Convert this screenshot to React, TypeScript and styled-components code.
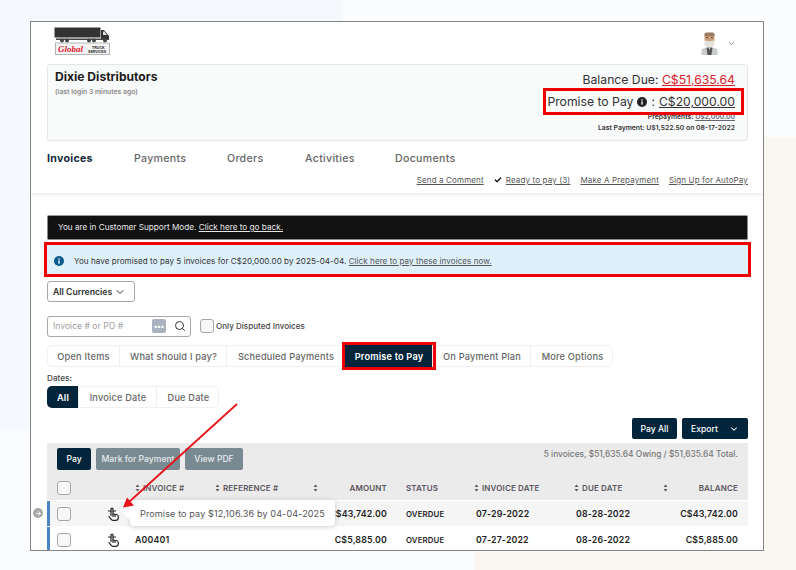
import React from "react";
import styled, { createGlobalStyle } from "styled-components";
import { Check, ChevronDown, Search, ArrowRight } from "lucide-react";

const GlobalStyle = createGlobalStyle`
    * { box-sizing: border-box; }
    html, body { margin: 0; padding: 0; height: 570px; overflow: hidden; }
    body {
        font-family: Inter, "Liberation Sans", sans-serif;
        color: #222;
        background-color: #fbfcfe;
        background-image:
            linear-gradient(#faf6f0, #faf6f0),
            linear-gradient(#faf6f0, #faf6f0),
            linear-gradient(#f5f8fd, #f5f8fd),
            linear-gradient(#f9fbfe, #f9fbfe);
        background-repeat: no-repeat;
        background-size: 321px 433px, 33px 433px, 342px 430px, 475px 140px;
        background-position: 475px 137px, 763px 137px, 0 0, 0 430px;
    }
`;

const Page = styled.div`
    padding: 21px 0 0 30px;
`;

const Frame = styled.div`
    position: relative;
    width: 734px;
    height: 530px;
    background: #fff;
    border: 1px solid #858585;
    overflow: hidden;
`;

const Header = styled.header`
    height: 172px;
    padding: 0 15px 0 16px;
    border-bottom: 1px solid #ececec;
    box-shadow: 0 2px 3px rgba(0, 0, 0, 0.06);
`;

const TopBar = styled.div`
    height: 42px;
    display: flex;
    align-items: flex-start;
    justify-content: space-between;
    padding: 5px 12px 0 7px;
`;

const Profile = styled.div`
    display: flex;
    align-items: center;
    gap: 9px;
    padding-top: 5px;
    color: #666;
`;

const SummaryCard = styled.section`
    height: 77px;
    display: flex;
    justify-content: space-between;
    padding: 5px 12px 0 7px;
    background: #f9fafa;
    border: 1px solid #e6e8e8;
    border-radius: 3px;
`;

const CompanyName = styled.div`
    font-size: 12.1px;
    font-weight: 700;
    color: #1c1c1c;
    line-height: 14px;
`;

const LastLogin = styled.div`
    font-size: 6.8px;
    font-weight: 600;
    color: #8a8a8a;
    line-height: 10px;
    margin-top: 3px;
`;

const Balances = styled.div`
    display: flex;
    flex-direction: column;
    align-items: flex-end;
`;

const BalanceLine = styled.div`
    font-size: 12.2px;
    line-height: 16px;
    height: 18px;
    padding-top: 2px;
    color: #333;
`;

const RedAmount = styled.a`
    color: #d8212b;
    text-decoration: underline;
`;

const PromiseBox = styled.div`
    position: relative;
    z-index: 1;
    display: flex;
    align-items: center;
    gap: 4px;
    height: 27px;
    margin-right: -9px;
    padding: 0 6px 0 1px;
    border: 3px solid #f00000;
    font-size: 12.2px;
    color: #333;
`;

const DarkAmount = styled.a`
    color: #333;
    text-decoration: underline;
`;

const SmallLine = styled.div<{ $offset?: number }>`
    font-size: 6.8px;
    font-weight: 600;
    line-height: 10px;
    color: #333;
    margin-top: ${(p) => p.$offset ?? 0}px;
`;

const MutedLink = styled.a`
    color: #667;
    text-decoration: underline;
`;

const Nav = styled.nav`
    display: flex;
    height: 34px;
    padding-top: 11px;
`;

const NavItem = styled.a<{ $active?: boolean; $width: number }>`
    width: ${(p) => p.$width}px;
    font-size: 10.6px;
    line-height: 14px;
    letter-spacing: 0.3px;
    font-weight: ${(p) => (p.$active ? 700 : 500)};
    color: ${(p) => (p.$active ? "#13293a" : "#666")};
`;

const ActionLinks = styled.div`
    display: flex;
    justify-content: flex-end;
    align-items: center;
    gap: 10px;
    height: 14px;
    margin-top: -2px;
`;

const ActionLink = styled.a`
    display: inline-flex;
    align-items: center;
    gap: 4px;
    font-size: 8px;
    letter-spacing: 0.14px;
    color: #555;
    text-decoration: underline;
`;

const Main = styled.main`
    padding: 21px 15px 0 16px;
`;

const SupportBar = styled.div`
    height: 25px;
    display: flex;
    align-items: center;
    padding: 0 0 1px 10px;
    background: #111;
    border: 1px solid #888;
    border-top-color: #999;
    border-radius: 2px;
    font-size: 8.2px;
    color: #e8e8e8;
    a {
        color: #e8e8e8;
        text-decoration: underline;
    }
`;

const NoticeBox = styled.div`
    height: 35px;
    margin: 2px -3px 0;
    display: flex;
    align-items: center;
    gap: 10px;
    padding: 3px 0 0 7px;
    background: #def1fb;
    border: 3px solid #f00000;
    font-size: 8.1px;
    letter-spacing: 0.04px;
    color: #333;
    a {
        color: #555;
        text-decoration: underline;
    }
`;

const CurrencySelect = styled.div`
    width: 88px;
    height: 21px;
    margin-top: 4px;
    display: flex;
    align-items: center;
    justify-content: space-between;
    padding: 0 8px 0 5px;
    border: 1px solid #a8a8a8;
    border-radius: 3px;
    font-size: 8.7px;
    font-weight: 600;
    color: #333;
`;

const SearchRow = styled.div`
    display: flex;
    align-items: center;
    margin-top: 14px;
    height: 20px;
`;

const SearchBox = styled.div`
    width: 144px;
    height: 21px;
    display: flex;
    align-items: center;
    padding: 0 4px 0 5px;
    border: 1px solid #a8a8a8;
    border-radius: 3px;
    font-size: 8.6px;
    color: #a0a0a0;
`;

const Placeholder = styled.span`
    flex: 1;
`;

const DotsButton = styled.span`
    width: 14px;
    height: 14px;
    margin-right: 8px;
    display: flex;
    align-items: center;
    justify-content: center;
    background: #abb2bf;
    border-radius: 2px;
    color: #fff;
    font-size: 7px;
    font-weight: 700;
    line-height: 1;
`;

const Checkbox = styled.span<{ $margin?: number }>`
    display: block;
    flex: none;
    width: 14px;
    height: 14px;
    margin-left: ${(p) => p.$margin ?? 0}px;
    background: #f8f8f8;
    border: 1px solid #a2a8ad;
    border-radius: 3px;
`;

const CheckLabel = styled.span`
    margin-left: 2px;
    font-size: 8.1px;
    font-weight: 500;
    color: #444;
`;

const Segments = styled.div<{ $top: number }>`
    display: inline-flex;
    height: 22px;
    margin-top: ${(p) => p.$top}px;
    border: 1px solid #f0f0f0;
    border-radius: 5px;
    vertical-align: top;
`;

const Segment = styled.span<{ $width: number; $active?: boolean; $marked?: boolean }>`
    position: relative;
    width: ${(p) => p.$width}px;
    margin: -1px 0;
    padding-left: 1px;
    display: flex;
    align-items: center;
    justify-content: center;
    font-size: 9.2px;
    font-weight: ${(p) => (p.$active ? 600 : 500)};
    letter-spacing: 0.2px;
    color: ${(p) => (p.$active ? "#fff" : "#666")};
    background: ${(p) => (p.$active ? "#03253b" : "transparent")};
    border-right: 1px solid #efefef;
    border-radius: ${(p) => (p.$active && !p.$marked ? "5px 0 0 5px" : "0")};
    box-shadow: ${(p) => (p.$marked ? "0 0 0 3px #f00000" : "none")};
    &:first-child {
        margin-left: -1px;
    }
    &:last-child {
        border-right: none;
        margin-right: -1px;
    }
`;

const DatesLabel = styled.div`
    margin-top: 6px;
    font-size: 8.2px;
    line-height: 10px;
    font-weight: 500;
    color: #444;
`;

const TableActions = styled.div`
    margin-top: 10px;
    display: flex;
    justify-content: flex-end;
    gap: 5px;
`;

const DarkButton = styled.button<{ $width: number; $height?: number; $between?: boolean }>`
    width: ${(p) => p.$width}px;
    height: ${(p) => p.$height ?? 21}px;
    display: flex;
    align-items: center;
    justify-content: ${(p) => (p.$between ? "space-between" : "center")};
    padding: ${(p) => (p.$between ? "0 9px" : "0")};
    background: #03253b;
    color: #fff;
    border: none;
    border-radius: 2px;
    font-family: inherit;
    font-size: 8.6px;
    font-weight: 500;
`;

const GrayButton = styled(DarkButton)`
    background: #7a8a93;
    color: #e6eaec;
`;

const Table = styled.div`
    margin-top: 4px;
`;

const Toolbar = styled.div`
    height: 33px;
    display: flex;
    gap: 5px;
    padding: 5px 10px;
    background: #ebebeb;
`;

const ToolbarTotals = styled.div`
    margin-left: auto;
    font-size: 8.35px;
    font-weight: 500;
    line-height: 12px;
    color: #777;
`;

const Row = styled.div<{ $kind: "head" | "odd" | "even" }>`
    position: relative;
    display: grid;
    grid-template-columns: 50px 35px 80px 98px 74px 19px 68px 100px 89px 75px 9px;
    align-items: center;
    height: ${(p) => (p.$kind === "head" ? 24 : 25)}px;
    margin-top: ${(p) => (p.$kind === "head" ? 0 : 1)}px;
    background: ${(p) =>
        p.$kind === "head" ? "#ebebeb" : p.$kind === "odd" ? "#f5f5f5" : "#fff"};
    border-left: 3px solid ${(p) => (p.$kind === "head" ? "transparent" : "#4a86c5")};
`;

const CheckCell = styled.div`
    padding-left: 7px;
`;

const HeadCell = styled.div<{ $column?: number }>`
    grid-column: ${(p) => p.$column ?? "auto"};
    display: flex;
    align-items: center;
    gap: 3px;
    font-size: 8px;
    font-weight: 600;
    letter-spacing: 0.15px;
    color: #5b5560;
    white-space: nowrap;
`;

const HeadSpacer = styled.span`
    flex: 1;
`;

const SortArrows = styled.svg`
    flex: none;
    width: 5px;
    height: 8px;
`;

const Cell = styled.div<{ $right?: boolean; $column?: number; $indent?: number; $small?: boolean }>`
    grid-column: ${(p) => p.$column ?? "auto"};
    padding-left: ${(p) => p.$indent ?? 0}px;
    text-align: ${(p) => (p.$right ? "right" : "left")};
    font-size: ${(p) => (p.$small ? 7.8 : 8.8)}px;
    font-weight: 600;
    letter-spacing: 0.15px;
    color: #1d1d1d;
    white-space: nowrap;
`;

const IconCell = styled.div`
    display: flex;
    padding-left: 7px;
    color: #222;
`;

const RowMarker = styled.div`
    position: absolute;
    left: -17px;
    top: 7px;
    width: 10px;
    height: 10px;
    display: flex;
    align-items: center;
    justify-content: center;
    border-radius: 50%;
    background: #a8a8a8;
    color: #fff;
`;

const Tooltip = styled.div`
    position: absolute;
    left: 80px;
    top: -1px;
    width: 205px;
    height: 26px;
    z-index: 2;
    display: flex;
    align-items: center;
    padding-left: 10px;
    background: #fff;
    border-radius: 4px;
    box-shadow: 0 1px 5px rgba(0, 0, 0, 0.2);
    font-size: 9.05px;
    letter-spacing: 0.12px;
    color: #555;
    white-space: nowrap;
    &::before {
        content: "";
        position: absolute;
        left: -5px;
        top: 8px;
        width: 10px;
        height: 10px;
        background: #fff;
        transform: rotate(45deg);
    }
`;

const Callout = styled.svg`
    position: absolute;
    left: 0;
    top: 0;
    z-index: 3;
    pointer-events: none;
`;

const Logo = () => (
    <svg width="57" height="28" viewBox="0 0 57 28">
        <rect x="0.5" y="0.5" width="46" height="10" fill="#333" />
        <path d="M47 3h3l5 6v4H47z" fill="#333" />
        <path d="M49 4.500h1.500l2.500 3.500h-4z" fill="#ddd" />
        <rect x="2" y="11.500" width="52" height="1.500" fill="#444" />
        <circle cx="8" cy="13.500" r="2" fill="#444" />
        <circle cx="13" cy="13.500" r="2" fill="#444" />
        <circle cx="35" cy="13.500" r="2" fill="#444" />
        <circle cx="40" cy="13.500" r="2" fill="#444" />
        <circle cx="51" cy="13.500" r="2" fill="#444" />
        <rect x="1.500" y="16" width="54" height="11.500" fill="#f4f4f4" stroke="#999" strokeWidth="0.7" />
        <text x="4" y="25" fontFamily="'Liberation Serif', serif" fontStyle="italic" fontWeight="700" fontSize="9" fill="#e0202c">
            Global
        </text>
        <text x="38" y="21.500" fontFamily="'Liberation Sans', sans-serif" fontWeight="700" fontSize="3.600" fill="#222">
            TRUCK
        </text>
        <text x="34" y="26" fontFamily="'Liberation Sans', sans-serif" fontWeight="700" fontSize="3.600" fill="#222">
            SERVICES
        </text>
    </svg>
);

const Avatar = () => (
    <svg width="17" height="23" viewBox="0 0 17 23">
        <path d="M0.500 23v-4c0-2.500 3-3.500 8-3.500s8 1 8 3.500v4z" fill="#c9cccc" />
        <path d="M5.500 15.500h6l-1 7.500h-4z" fill="#555" />
        <path d="M7.500 15.500h2l-1 2.500z" fill="#eee" />
        <rect x="3.500" y="1" width="10" height="9" rx="2" fill="#c79f7d" />
        <path d="M3.500 2l1.500-1.500h7L13.500 2v2h-10z" fill="#9c7b60" />
        <path d="M3.500 8c1.500 1.500 8.500 1.500 10 0v3c0 3-2 4-5 4s-5-1-5-4z" fill="#e4e0da" />
        <rect x="5" y="5" width="2" height="1" fill="#5b4a3c" />
        <rect x="10" y="5" width="2" height="1" fill="#5b4a3c" />
    </svg>
);

const InfoDot = ({ size, fill }: { size: number; fill: string }) => (
    <svg width={size} height={size} viewBox="0 0 12 12">
        <circle cx="6" cy="6" r="6" fill={fill} />
        <rect x="5.200" y="5.200" width="1.600" height="4" fill="#fff" />
        <rect x="5.200" y="2.700" width="1.600" height="1.600" fill="#fff" />
    </svg>
);

const Sort = () => (
    <SortArrows viewBox="0 0 5 8">
        <path d="M2.500 0.500L4.500 3H0.500zM2.500 7.500L0.500 5H4.500z" fill="#5b5560" />
    </SortArrows>
);

const PromiseHand = () => (
    <svg width="12" height="14" viewBox="0 0 12 14" fill="none" stroke="currentColor" strokeWidth="1.200" strokeLinecap="round" strokeLinejoin="round">
        <path d="M4 8.500V2.200a1 1 0 0 1 2 0V7l3.500 0.500c1 0.200 1.800 1 1.800 2v1.300c0 1.400-1 2.500-2.500 2.500H6c-1 0-1.500-0.400-2-1.100L2 9.500" />
        <path d="M1.500 4h2.500M6 4h2.500" />
        <path d="M8 7.500V9.500M6 7V9.500" />
    </svg>
);

const rows = [
    { invoice: "", amount: "C$43,742.00", invoiceDate: "07-29-2022", dueDate: "08-28-2022", kind: "odd" as const },
    { invoice: "A00401", amount: "C$5,885.00", invoiceDate: "07-27-2022", dueDate: "08-26-2022", kind: "even" as const }
];

const App = () => {
    return (
        <Page>
            <GlobalStyle />
            <Frame>
                <Header>
                    <TopBar>
                        <Logo />
                        <Profile>
                            <Avatar />
                            <ChevronDown size={9} strokeWidth={2} />
                        </Profile>
                    </TopBar>
                    <SummaryCard>
                        <div>
                            <CompanyName>Dixie Distributors</CompanyName>
                            <LastLogin>(last login 3 minutes ago)</LastLogin>
                        </div>
                        <Balances>
                            <BalanceLine>
                                Balance Due: <RedAmount>C$51,635.64</RedAmount>
                            </BalanceLine>
                            <PromiseBox>
                                Promise to Pay <InfoDot size={10} fill="#222" /> : <DarkAmount>C$20,000.00</DarkAmount>
                            </PromiseBox>
                            <SmallLine $offset={-3}>
                                Prepayments: <MutedLink>U$2,000.00</MutedLink>
                            </SmallLine>
                            <SmallLine $offset={1}>Last Payment: U$1,522.50 on 08-17-2022</SmallLine>
                        </Balances>
                    </SummaryCard>
                    <Nav>
                        <NavItem $active $width={87}>Invoices</NavItem>
                        <NavItem $width={93}>Payments</NavItem>
                        <NavItem $width={78}>Orders</NavItem>
                        <NavItem $width={90}>Activities</NavItem>
                        <NavItem $width={80}>Documents</NavItem>
                    </Nav>
                    <ActionLinks>
                        <ActionLink>Send a Comment</ActionLink>
                        <ActionLink>
                            <Check size={8} strokeWidth={4} color="#111" />
                            Ready to pay (3)
                        </ActionLink>
                        <ActionLink>Make A Prepayment</ActionLink>
                        <ActionLink>Sign Up for AutoPay</ActionLink>
                    </ActionLinks>
                </Header>
                <Main>
                    <SupportBar>
                        <span>
                            You are in Customer Support Mode. <a>Click here to go back.</a>
                        </span>
                    </SupportBar>
                    <NoticeBox>
                        <InfoDot size={10} fill="#0b5a8e" />
                        <span>
                            You have promised to pay 5 invoices for C$20,000.00 by 2025-04-04.{" "}
                            <a>Click here to pay these invoices now.</a>
                        </span>
                    </NoticeBox>
                    <CurrencySelect>
                        All Currencies
                        <ChevronDown size={12} strokeWidth={2} color="#333" />
                    </CurrencySelect>
                    <SearchRow>
                        <SearchBox>
                            <Placeholder>Invoice # or PO #</Placeholder>
                            <DotsButton>•••</DotsButton>
                            <Search size={12} strokeWidth={2} color="#333" />
                        </SearchBox>
                        <Checkbox $margin={9} />
                        <CheckLabel>Only Disputed Invoices</CheckLabel>
                    </SearchRow>
                    <div>
                        <Segments $top={9}>
                            <Segment $width={73}>Open Items</Segment>
                            <Segment $width={107}>What should I pay?</Segment>
                            <Segment $width={118}>Scheduled Payments</Segment>
                            <Segment $width={88} $active $marked>Promise to Pay</Segment>
                            <Segment $width={98}>On Payment Plan</Segment>
                            <Segment $width={82}>More Options</Segment>
                        </Segments>
                    </div>
                    <DatesLabel>Dates:</DatesLabel>
                    <Segments $top={3}>
                        <Segment $width={32} $active>All</Segment>
                        <Segment $width={78}>Invoice Date</Segment>
                        <Segment $width={62}>Due Date</Segment>
                    </Segments>
                    <TableActions>
                        <DarkButton $width={45}>Pay All</DarkButton>
                        <DarkButton $width={66} $between>
                            Export
                            <ChevronDown size={10} strokeWidth={2.500} />
                        </DarkButton>
                    </TableActions>
                    <Table>
                        <Toolbar>
                            <DarkButton $width={34} $height={22}>Pay</DarkButton>
                            <GrayButton $width={84} $height={22}>Mark for Payment</GrayButton>
                            <GrayButton $width={58} $height={22}>View PDF</GrayButton>
                            <ToolbarTotals>5 invoices, $51,635.64 Owing / $51,635.64 Total.</ToolbarTotals>
                        </Toolbar>
                        <Row $kind="head">
                            <CheckCell>
                                <Checkbox />
                            </CheckCell>
                            <HeadCell $column={3}><Sort />INVOICE #</HeadCell>
                            <HeadCell><Sort />REFERENCE #</HeadCell>
                            <HeadCell $column={5}><Sort /><HeadSpacer />AMOUNT</HeadCell>
                            <HeadCell $column={7}>STATUS</HeadCell>
                            <HeadCell><Sort />INVOICE DATE</HeadCell>
                            <HeadCell><Sort />DUE DATE</HeadCell>
                            <HeadCell><Sort /><HeadSpacer />BALANCE</HeadCell>
                        </Row>
                        {rows.map((row, i) => (
                            <Row $kind={row.kind} key={row.dueDate}>
                                {i === 0 && (
                                    <RowMarker>
                                        <ArrowRight size={7} strokeWidth={3} />
                                    </RowMarker>
                                )}
                                <CheckCell>
                                    <Checkbox />
                                </CheckCell>
                                <IconCell>
                                    <PromiseHand />
                                </IconCell>
                                <Cell>{row.invoice}</Cell>
                                <Cell $column={5} $right>{row.amount}</Cell>
                                <Cell $column={7} $small>OVERDUE</Cell>
                                <Cell $indent={2}>{row.invoiceDate}</Cell>
                                <Cell $indent={2}>{row.dueDate}</Cell>
                                <Cell $right>{row.amount}</Cell>
                                {i === 0 && <Tooltip>Promise to pay $12,106.36 by 04-04-2025</Tooltip>}
                            </Row>
                        ))}
                    </Table>
                </Main>
                <Callout width="732" height="528" viewBox="0 0 732 528">
                    <line x1="206" y1="382" x2="98" y2="480" stroke="#e8141c" strokeWidth="1.800" />
                    <path d="M92 485.500L96 475.500L103 483.500z" fill="#e8141c" />
                </Callout>
            </Frame>
        </Page>
    );
};

export default App;
